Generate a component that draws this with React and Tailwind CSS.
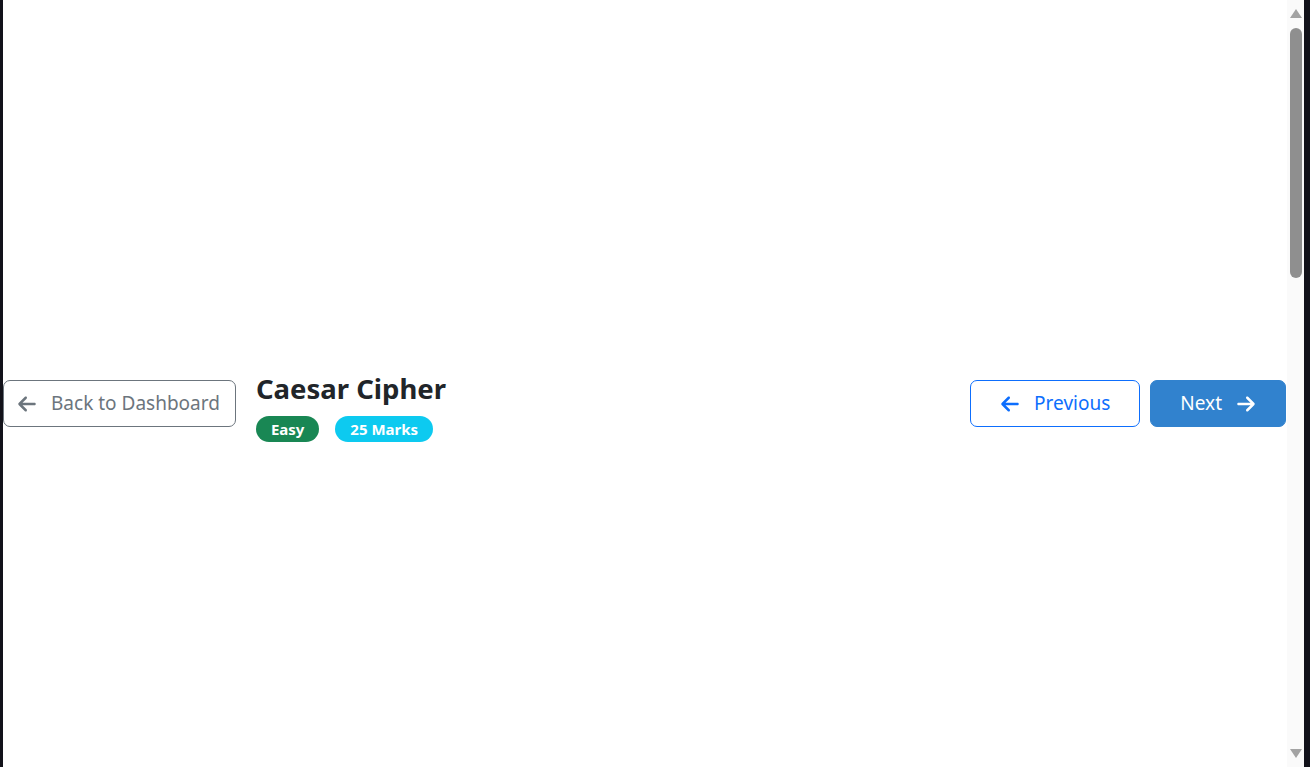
import { FaArrowLeft, FaArrowRight } from 'react-icons/fa6';

const FONT = { fontFamily: '"Noto Sans", "Open Sans", sans-serif' };

function Scrollbar() {
  return (
    <div className="w-[17px] h-full bg-[#fafafa] flex flex-col items-center">
      <div className="mt-[9px] w-0 h-0 border-l-[6px] border-r-[6px] border-b-[9px] border-l-transparent border-r-transparent border-b-[#a3a3a3]" />
      <div className="mt-[10px] ml-[1px] w-[12px] h-[250px] rounded-full bg-[#8f8f8f]" />
      <div className="mt-auto mb-[9px] w-0 h-0 border-l-[6px] border-r-[6px] border-t-[9px] border-l-transparent border-r-transparent border-t-[#a3a3a3]" />
    </div>
  );
}

export default function App() {
  return (
    <div className="flex h-[767px] w-[1310px] bg-[#12121a] overflow-hidden" style={FONT}>
      <div className="w-[3px]" />
      <main className="flex-1 bg-white pt-[380px] pr-[1px]">
        {/* Header */}
        <div className="flex items-start justify-between">
          <div className="flex items-start gap-5">
            <button className="h-[47px] flex items-center gap-[14px] pl-[13px] pr-[15px] border border-[#6c757d] rounded-[7px] text-[19px] text-[#6c757d] bg-white">
              <FaArrowLeft className="text-[20px]" />
              <span>Back to Dashboard</span>
            </button>
            <div className="-mt-[8px]">
              <h1 className="text-[27.5px] leading-[34px] font-bold text-[#212529]">Caesar Cipher</h1>
              <div className="flex items-center gap-4 mt-[10px]">
                <span className="h-[26px] px-[15px] flex items-center rounded-full bg-[#198754] text-white text-[15px] font-bold">Easy</span>
                <span className="h-[26px] px-[15px] flex items-center rounded-full bg-[#0dcaf0] text-white text-[15px] font-bold">25 Marks</span>
              </div>
            </div>
          </div>
          <div className="flex items-center gap-[10px]">
            <button className="h-[47px] flex items-center gap-[14px] px-[29px] border border-[#0d6efd] rounded-[7px] text-[19px] text-[#0d6efd] bg-white">
              <FaArrowLeft className="text-[20px]" />
              <span>Previous</span>
            </button>
            <button className="h-[47px] flex items-center gap-[14px] px-[29px] border border-[#3182ce] rounded-[7px] text-[19px] text-white bg-[#3182ce]">
              <span>Next</span>
              <FaArrowRight className="text-[20px]" />
            </button>
          </div>
        </div>
      </main>
      <Scrollbar />
      <div className="w-[6px]" />
    </div>
  );
}
